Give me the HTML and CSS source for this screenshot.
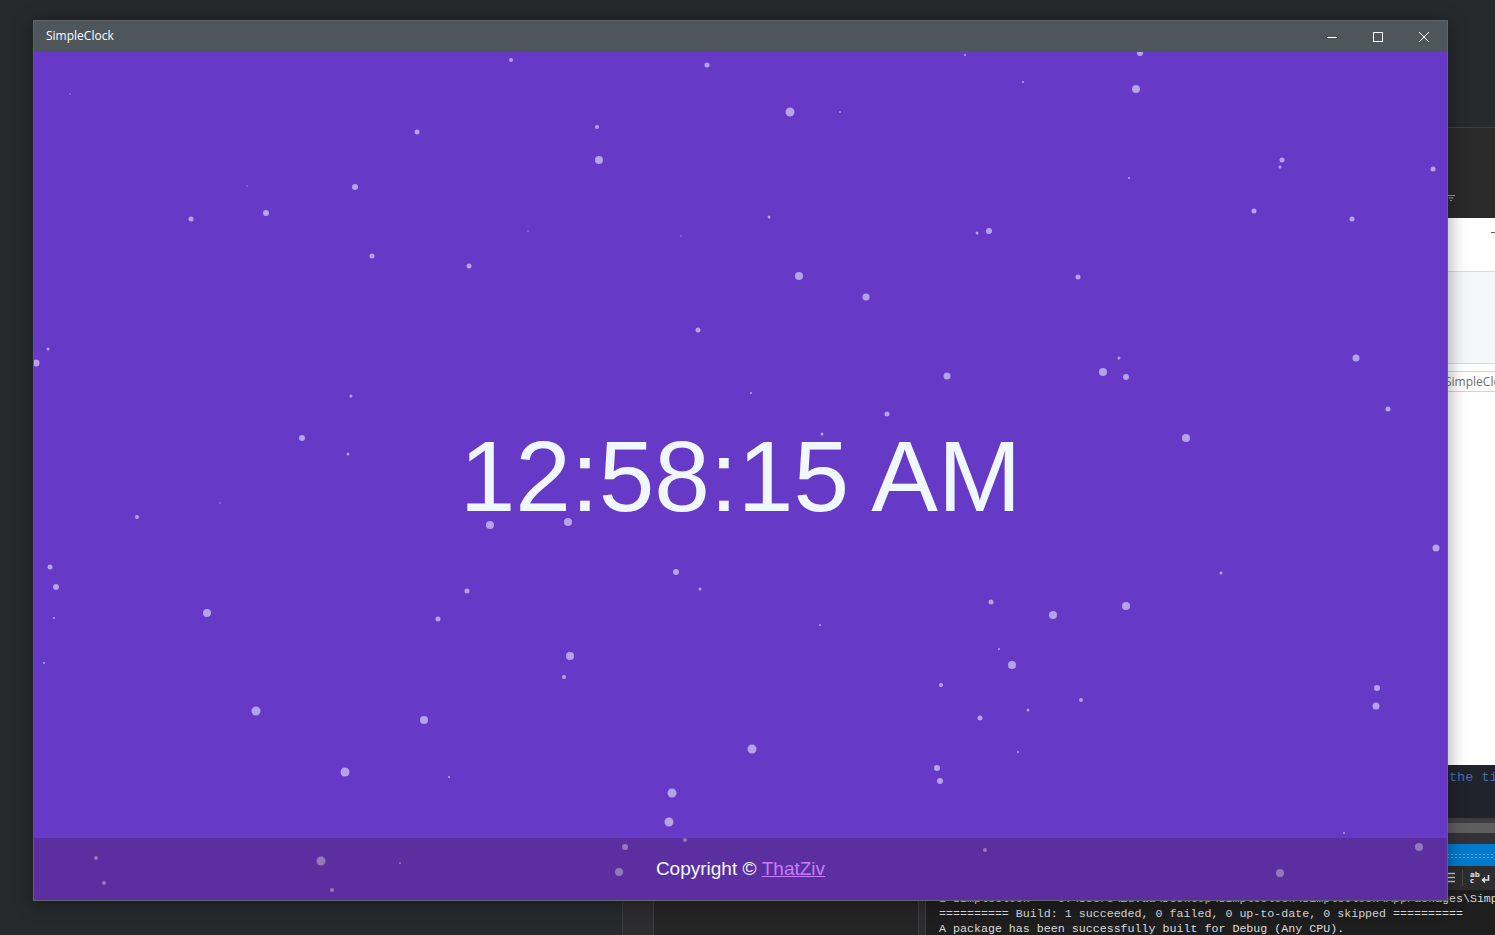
FILE: index.html
```html
<!DOCTYPE html>
<html lang="en">
<head>
<meta charset="utf-8">
<title>SimpleClock</title>
<link rel="stylesheet" href="styles.css">
</head>
<body>
<div class="desktop">
  <div class="vs-side">
    <div class="side-a"></div>
    <div class="side-b"></div>
    <div class="side-c"></div>
  </div>
  <div class="vs-main">
    <div class="vs-head">
      <svg class="head-icon" width="8" height="7" viewBox="0 0 8 7"><path d="M0 1.5h8M1.5 4h5M3 6.5h2" stroke="#9a9a9a" stroke-width="1"/></svg>
    </div>
    <div class="vs-props">
      <div class="props-top"><span class="props-dash"></span></div>
      <div class="props-gray"></div>
      <div class="props-gap"></div>
      <div class="props-box">SimpleClock</div>
      <div class="props-rest"></div>
    </div>
    <div class="vs-code"><span class="code-line">the time</span></div>
    <div class="vs-scroll"><div class="scroll-thumb"></div></div>
    <div class="vs-gap"></div>
    <div class="vs-outhead"><div class="grip"></div></div>
    <div class="vs-tools">
      <svg class="tool-lines" width="8" height="14" viewBox="0 0 8 14"><path d="M0 2.5h8M0 6.5h8M0 10.5h8" stroke="#c8c8c8" stroke-width="1.4"/></svg>
      <span class="tool-sep"></span>
      <span class="tool-wrap"><span class="wrap-ab">ab<br>c</span><svg width="10" height="10" viewBox="0 0 10 10"><path d="M8.5 1v5H3M5 3.5L2.5 6 5 8.5" fill="none" stroke="#e0e0e0" stroke-width="1.6"/></svg></span>
    </div>
    <div class="vs-output">
      <div class="out-line">1&gt;SimpleClock -&gt; C:\Users\Zuvaa\Desktop\SimpleClock\SimpleClock\AppPackages\SimpleClock_1.0.0.0_Debug_Test\</div>
      <div class="out-line">========== Build: 1 succeeded, 0 failed, 0 up-to-date, 0 skipped ==========</div>
      <div class="out-line">A package has been successfully built for Debug (Any CPU).</div>
    </div>
  </div>

  <div class="window">
    <div class="titlebar">
      <span class="title">SimpleClock</span>
      <div class="controls">
        <span class="ctrl"><svg width="10" height="10" viewBox="0 0 10 10"><path d="M0 5.5h10" stroke="#fff" stroke-width="1"/></svg></span>
        <span class="ctrl"><svg width="10" height="10" viewBox="0 0 10 10"><rect x="0.5" y="0.5" width="9" height="9" fill="none" stroke="#fff" stroke-width="1"/></svg></span>
        <span class="ctrl"><svg width="10" height="10" viewBox="0 0 10 10"><path d="M0 0L10 10M10 0L0 10" stroke="#fff" stroke-width="1"/></svg></span>
      </div>
    </div>
    <div class="content">
      <svg class="stars" width="1413" height="848" viewBox="0 0 1413 848">
        <g transform="translate(-34,-52)" fill="#b7a2e8">
          <circle cx="511" cy="60" r="2"/><circle cx="707" cy="65" r="2.5"/><circle cx="1140" cy="53" r="3"/>
          <circle cx="1136" cy="89" r="4"/><circle cx="790" cy="112" r="4.5"/><circle cx="417" cy="132" r="2.5"/>
          <circle cx="597" cy="127" r="2"/><circle cx="599" cy="160" r="4"/><circle cx="355" cy="187" r="3"/>
          <circle cx="266" cy="213" r="3"/><circle cx="191" cy="219" r="2.5"/><circle cx="1282" cy="160" r="2.5"/>
          <circle cx="1280" cy="167" r="1.5"/><circle cx="1433" cy="169" r="2.5"/><circle cx="1254" cy="211" r="2.5"/>
          <circle cx="1352" cy="219" r="2.5"/><circle cx="769" cy="217" r="1.5"/><circle cx="977" cy="233" r="1.5"/>
          <circle cx="989" cy="231" r="3"/><circle cx="372" cy="256" r="2.5"/><circle cx="469" cy="266" r="2.5"/>
          <circle cx="799" cy="276" r="4"/><circle cx="1078" cy="277" r="2.5"/><circle cx="866" cy="297" r="3.5"/>
          <circle cx="698" cy="330" r="2.5"/><circle cx="36" cy="363" r="3.5"/><circle cx="48" cy="349" r="1.5"/>
          <circle cx="1356" cy="358" r="3.5"/><circle cx="1119" cy="358" r="1.5"/><circle cx="1103" cy="372" r="4"/>
          <circle cx="1126" cy="377" r="3"/><circle cx="947" cy="376" r="3.5"/><circle cx="751" cy="393" r="1"/>
          <circle cx="351" cy="396" r="1.5"/><circle cx="1388" cy="409" r="2.5"/><circle cx="887" cy="414" r="2.5"/>
          <circle cx="302" cy="438" r="3"/><circle cx="1186" cy="438" r="4"/><circle cx="348" cy="454" r="1.5"/>
          <circle cx="822" cy="434" r="1.5"/><circle cx="137" cy="517" r="2"/><circle cx="490" cy="525" r="4"/>
          <circle cx="568" cy="522" r="4"/><circle cx="220" cy="503" r="0.7"/><circle cx="1436" cy="548" r="3.5"/>
          <circle cx="50" cy="567" r="2.5"/><circle cx="676" cy="572" r="3"/><circle cx="1221" cy="573" r="1.5"/>
          <circle cx="56" cy="587" r="3"/><circle cx="700" cy="589" r="1.5"/><circle cx="467" cy="591" r="2.5"/>
          <circle cx="991" cy="602" r="2.5"/><circle cx="1126" cy="606" r="4"/><circle cx="1053" cy="615" r="4"/>
          <circle cx="207" cy="613" r="4"/><circle cx="438" cy="619" r="2.5"/><circle cx="54" cy="618" r="1"/>
          <circle cx="820" cy="625" r="1"/><circle cx="999" cy="649" r="1"/><circle cx="570" cy="656" r="4"/>
          <circle cx="1012" cy="665" r="4"/><circle cx="44" cy="663" r="1"/><circle cx="564" cy="677" r="2"/>
          <circle cx="941" cy="685" r="2"/><circle cx="1377" cy="688" r="3"/><circle cx="1081" cy="700" r="2"/>
          <circle cx="1376" cy="706" r="3.5"/><circle cx="1028" cy="710" r="1.5"/><circle cx="256" cy="711" r="4.5"/>
          <circle cx="424" cy="720" r="4"/><circle cx="980" cy="718" r="2.5"/><circle cx="752" cy="749" r="4.5"/>
          <circle cx="1018" cy="752" r="1"/><circle cx="345" cy="772" r="4.5"/><circle cx="937" cy="768" r="3"/>
          <circle cx="940" cy="781" r="3"/><circle cx="449" cy="777" r="1"/><circle cx="672" cy="793" r="4.5"/>
          <circle cx="669" cy="822" r="4.5"/><circle cx="685" cy="840" r="2"/><circle cx="625" cy="847" r="3"/>
          <circle cx="1344" cy="833" r="1"/><circle cx="96" cy="858" r="2"/><circle cx="321" cy="861" r="4.5"/>
          <circle cx="1419" cy="847" r="4"/><circle cx="985" cy="850" r="2"/><circle cx="619" cy="872" r="4"/>
          <circle cx="1280" cy="873" r="4"/><circle cx="104" cy="883" r="2"/><circle cx="400" cy="863" r="1"/>
          <circle cx="332" cy="890" r="2"/><circle cx="1023" cy="82" r="1"/><circle cx="840" cy="112" r="1"/>
          <circle cx="247" cy="186" r="0.7"/><circle cx="1129" cy="178" r="1"/><circle cx="681" cy="236" r="0.7"/>
          <circle cx="528" cy="231" r="0.7"/><circle cx="965" cy="55" r="1"/><circle cx="70" cy="94" r="0.7"/>
        </g>
      </svg>
      <div class="clock">12:58:15 AM</div>
      <footer class="footer">Copyright ©&nbsp;<a class="footer-link" href="#">ThatZiv</a></footer>
    </div>
  </div>
</div>
</body>
</html>
```
FILE: styles.css
```css
html, body {
  margin: 0;
  padding: 0;
}

body {
  background: #262a2d;
  width: 1495px;
  height: 935px;
  overflow: hidden;
}

.desktop {
  position: relative;
  width: 1495px;
  height: 935px;
  overflow: hidden;
  background: #262a2d;
}

/* ---------- background IDE window ---------- */
.vs-side {
  position: absolute;
  left: 622px;
  top: 845px;
  bottom: 0;
  width: 304px;
  display: grid;
  grid-template-columns: 32px 264px 8px;
}

.side-a {
  background: #2d2d2f;
  border-left: 1px solid #3b3b3d;
  border-right: 1px solid #3f3f42;
}

.side-b {
  background: #252526;
}

.side-c {
  background: #2d2d30;
  border-left: 1px solid #3f3f42;
  border-right: 1px solid #3f3f42;
}

.vs-main {
  position: absolute;
  left: 926px;
  top: 127px;
  right: 0;
  bottom: 0;
  display: flex;
  flex-direction: column;
  background: #1e1e1e;
}

.vs-head {
  height: 91px;
  border-top: 1px solid #3d3f42;
  background: #2a2a2b;
  display: flex;
  align-items: flex-end;
  padding-left: 521px;
  padding-bottom: 17px;
  box-sizing: border-box;
}

.head-icon {
  display: block;
}

.vs-props {
  height: 547px;
  background: #ffffff;
  display: flex;
  flex-direction: column;
}

.props-top {
  height: 54px;
  border-bottom: 1px solid #d9d9d9;
  display: flex;
  justify-content: flex-end;
  padding-top: 14px;
  box-sizing: border-box;
}

.props-dash {
  display: block;
  width: 4px;
  height: 1px;
  background: #555;
}

.props-gray {
  height: 91px;
  background: #f5f6f7;
  border-bottom: 1px solid #d9d9d9;
}

.props-gap {
  height: 7px;
}

.props-box {
  height: 19px;
  border-top: 1px solid #d4d4d4;
  border-bottom: 1px solid #d4d4d4;
  padding-left: 519px;
  font: 12px "Open Sans", "Noto Sans", sans-serif;
  line-height: 19px;
  color: #6e6e6e;
  white-space: nowrap;
  overflow: hidden;
}

.props-rest {
  flex: 1;
}

.vs-code {
  height: 53px;
  background: #20232a;
  padding-left: 523px;
  padding-top: 2px;
  box-sizing: border-box;
  white-space: nowrap;
  overflow: hidden;
}

.code-line {
  font: 13.5px "Liberation Mono", monospace;
  line-height: 18px;
  color: #4c6ab0;
}

.vs-scroll {
  height: 15px;
  background: #3e3e40;
  padding-top: 5px;
  box-sizing: border-box;
}

.scroll-thumb {
  height: 10px;
  background: #5e5e5e;
}

.vs-gap {
  height: 11px;
  background: #333337;
}

.vs-outhead {
  height: 22px;
  background: #007acc;
  display: flex;
  align-items: center;
  padding-left: 8px;
}

.grip {
  flex: 1;
  height: 5px;
  background-image: radial-gradient(circle, #59a9e0 0.8px, transparent 1px);
  background-size: 4px 3px;
}

.vs-tools {
  height: 24px;
  background: #2d2d30;
  display: flex;
  align-items: center;
  padding-left: 521px;
  gap: 7px;
}

.tool-lines {
  display: block;
}

.tool-sep {
  width: 1px;
  height: 16px;
  background: #4a4a4d;
}

.tool-wrap {
  display: flex;
  align-items: flex-end;
  gap: 0;
}

.wrap-ab {
  font: bold 7px "DejaVu Sans", sans-serif;
  line-height: 6px;
  color: #e0e0e0;
}

.vs-output {
  flex: 1;
  background: #1e1e1e;
  padding-left: 13px;
  padding-top: 1px;
  font: 11.65px "Liberation Mono", monospace;
  line-height: 15px;
  color: #dcdcdc;
  white-space: nowrap;
  overflow: hidden;
}

/* ---------- the app window ---------- */
.window {
  position: absolute;
  left: 33px;
  top: 20px;
  width: 1415px;
  height: 881px;
  box-sizing: border-box;
  border: 1px solid #5f6569;
  display: flex;
  flex-direction: column;
  box-shadow: 0 2px 18px rgba(0, 0, 0, 0.38);
}

.titlebar {
  height: 31px;
  flex: none;
  background: #4e565b;
  display: flex;
  align-items: center;
  justify-content: space-between;
}

.title {
  padding-left: 12px;
  padding-bottom: 2px;
  font: 12px "Open Sans", "Noto Sans", sans-serif;
  color: #ffffff;
}

.controls {
  display: flex;
  height: 100%;
}

.ctrl {
  width: 46px;
  height: 100%;
  display: flex;
  align-items: center;
  justify-content: center;
}

.ctrl svg {
  display: block;
}

.content {
  flex: 1;
  position: relative;
  display: grid;
  background: #6739c7;
  overflow: hidden;
}

.stars {
  position: absolute;
  left: 0;
  top: 0;
}

.clock {
  grid-area: 1 / 1;
  align-self: center;
  justify-self: center;
  position: relative;
  font: 100px "Liberation Sans", Arial, sans-serif;
  line-height: 1;
  color: #f0f8ff;
  white-space: nowrap;
}

.footer {
  grid-area: 1 / 1;
  align-self: end;
  position: relative;
  height: 62px;
  background: rgba(66, 25, 71, 0.3);
  display: flex;
  align-items: center;
  justify-content: center;
  font: 19px "Liberation Sans", Arial, sans-serif;
  color: #f0f8ff;
}

.footer-link {
  color: #c77dfa;
  text-decoration: underline;
}
```
